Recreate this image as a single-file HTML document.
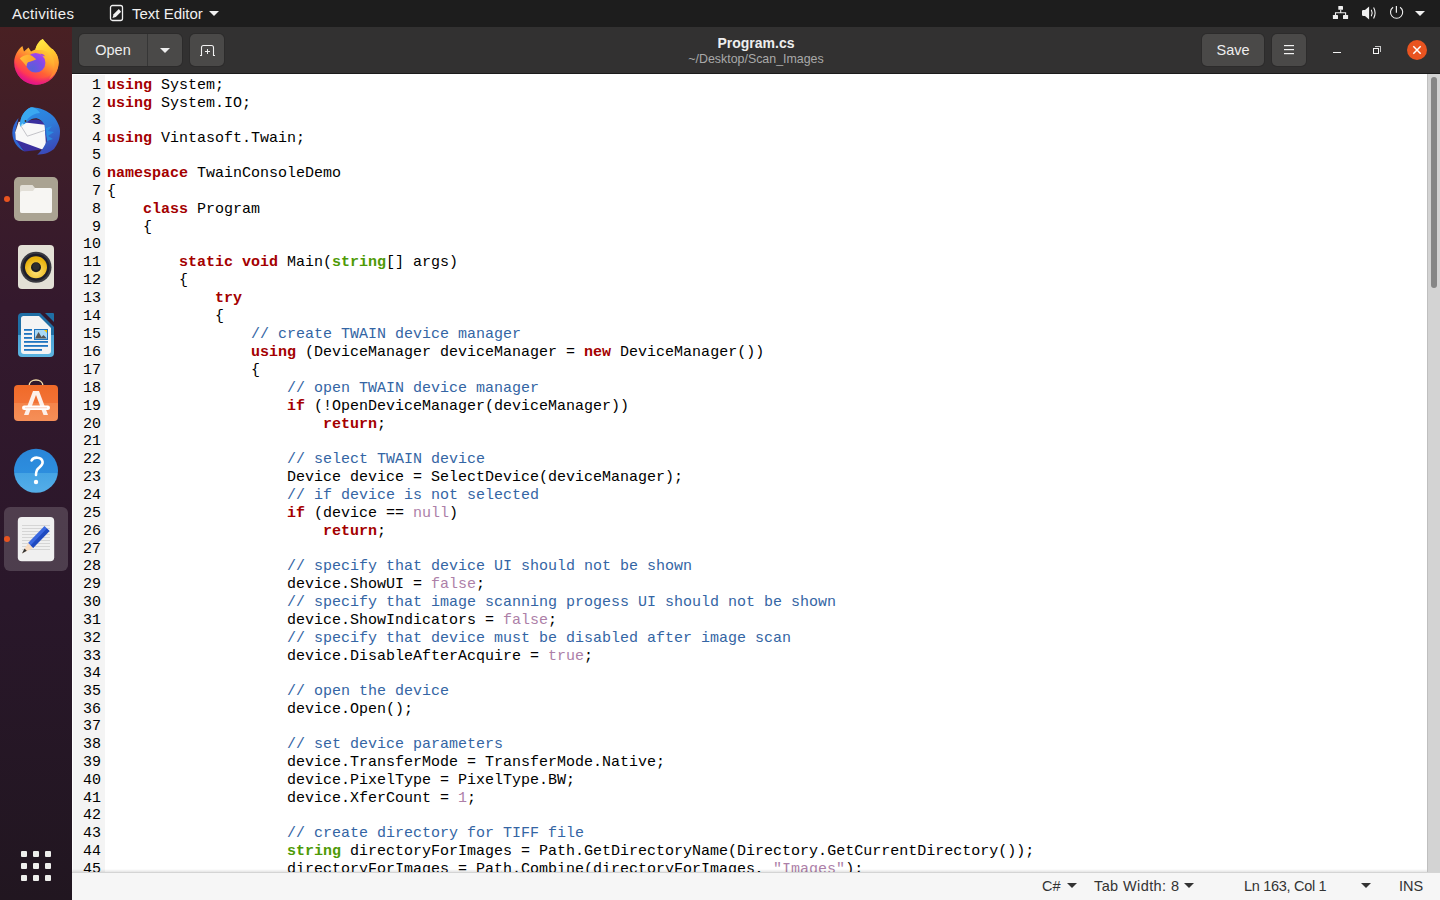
<!DOCTYPE html>
<html><head><meta charset="utf-8">
<style>
*{margin:0;padding:0;box-sizing:border-box}
html,body{width:1440px;height:900px;overflow:hidden;background:#fff;font-family:"Liberation Sans",sans-serif}
#panel{position:absolute;left:0;top:0;width:1440px;height:27px;background:#1d1d1d;color:#f0f0f0}
#panel .txt{position:absolute;top:0;height:27px;line-height:27px;font-size:15px;white-space:nowrap}
#dock{position:absolute;left:0;top:27px;width:72px;height:873px;background:linear-gradient(#492023 0%,#3d1d29 15%,#34192d 32%,#29172a 66%,#211620 100%)}
#hb{position:absolute;left:72px;top:27px;width:1368px;height:46px;background:#323131}
#hbb{position:absolute;left:72px;top:73px;width:1368px;height:1px;background:#1b1b1b}
.btn{position:absolute;top:34px;height:32px;background:#4a4948;border-radius:5px;box-shadow:0 0 0 1px #2c2b2b;color:#eee;font-size:14.5px;line-height:32px;text-align:center}
#view{position:absolute;left:72px;top:74px;width:1368px;height:798px;background:#fff;overflow:hidden}
#gutter{position:absolute;left:73px;top:75px;width:32px;height:797px;background:#f4f4f4}
.ln{position:absolute;left:0;height:18px;white-space:pre;font-family:"Liberation Mono",monospace;font-size:15px;line-height:18px;color:#000}
.ln .num{position:absolute;left:83px;width:18px;text-align:right}
.ln .src{position:absolute;left:107px}
.k{color:#a40000;font-weight:bold}
.t{color:#4e9a06;font-weight:bold}
.c{color:#3465a4}
.n{color:#ad7fa8}
#codewrap{position:absolute;left:0;top:0;width:1427px;height:872px;overflow:hidden;clip-path:inset(74px 0 0 72px)}
#sbt{position:absolute;left:1427px;top:74px;width:13px;height:798px;background:#d3d3d3;border-left:1px solid #bfbfbf}
#sbthumb{position:absolute;left:1431px;top:77px;width:6px;height:211px;background:#868686;border-radius:3px}
#status{position:absolute;left:72px;top:872px;width:1368px;height:28px;background:#f6f6f6;border-top:1px solid #d4d4d4;color:#333;font-size:14.5px}
#status .txt{position:absolute;top:0;line-height:27px;white-space:nowrap}
.tri{position:absolute;width:0;height:0;border-left:5px solid transparent;border-right:5px solid transparent;border-top:5px solid currentColor}
</style></head><body>
<div id="panel">
  <div class="txt" style="left:12px;letter-spacing:0.3px">Activities</div>
  <svg style="position:absolute;left:109px;top:4px" width="16" height="18" viewBox="0 0 16 18">
    <rect x="1.5" y="1.5" width="12" height="15" rx="2" fill="none" stroke="#f0f0f0" stroke-width="1.3"/>
    <path d="M4.6 10.3 L9.8 5 L12.1 7.8 L6.8 13 L3.5 13.9 Z" fill="#f0f0f0"/>
  </svg>
  <div class="txt" style="left:132px">Text Editor</div>
  <div class="tri" style="left:209px;top:11px;color:#f0f0f0"></div>
  <svg style="position:absolute;left:1330px;top:4px" width="20" height="18" viewBox="0 0 20 18">
    <rect x="8.3" y="1.9" width="4.7" height="3.9" rx="0.6" fill="#f0f0f0"/>
    <rect x="2.9" y="11" width="5.1" height="4" rx="0.6" fill="#f0f0f0"/>
    <rect x="13" y="11" width="5.1" height="4" rx="0.6" fill="#f0f0f0"/>
    <path d="M10.7 5.8 V8.8 M5.5 11 V8.8 H15.6 V11" stroke="#f0f0f0" stroke-width="1.1" fill="none"/>
  </svg>
  <svg style="position:absolute;left:1360px;top:4px" width="18" height="18" viewBox="0 0 18 18">
    <path d="M3.2 6 H5 L9.1 2.4 V15.5 L5 12 H3.2 Q2 12 2 10.8 V7.2 Q2 6 3.2 6 Z" fill="#f0f0f0"/>
    <path d="M11.3 5.8 Q13 9 11.3 12.2" stroke="#f0f0f0" stroke-width="1.1" fill="none"/>
    <path d="M13.6 3.6 Q16.6 9 13.6 14.4" stroke="#f0f0f0" stroke-width="1.1" fill="none"/>
  </svg>
  <svg style="position:absolute;left:1388px;top:4px" width="18" height="18" viewBox="0 0 18 18">
    <path d="M5.1 3.2 A6.1 6.1 0 1 0 12.1 3.2" stroke="#f0f0f0" stroke-width="1.1" fill="none"/>
    <path d="M8.4 1.9 V8.8" stroke="#f0f0f0" stroke-width="1.2"/>
  </svg>
  <div class="tri" style="left:1415px;top:11px;color:#f0f0f0"></div>
</div>

<div id="dock">
<svg width="72" height="873" viewBox="0 27 72 873" style="position:absolute;left:0;top:0">
<defs>
  <linearGradient id="ffo" x1="0.8" y1="0.1" x2="0.3" y2="1">
    <stop offset="0" stop-color="#ffe040"/>
    <stop offset="0.35" stop-color="#ffac30"/>
    <stop offset="0.62" stop-color="#ff6236"/>
    <stop offset="0.84" stop-color="#ff3458"/>
    <stop offset="1" stop-color="#e8148a"/>
  </linearGradient>
  <linearGradient id="ffy" x1="0" y1="0" x2="0.3" y2="1">
    <stop offset="0" stop-color="#fff148"/>
    <stop offset="0.5" stop-color="#ffc830"/>
    <stop offset="1" stop-color="#ff8a30"/>
  </linearGradient>
  <radialGradient id="ffrim" cx="0.55" cy="0.3" r="0.7">
    <stop offset="0.78" stop-color="#e0158a" stop-opacity="0"/>
    <stop offset="1" stop-color="#e0158a" stop-opacity="0.9"/>
  </radialGradient>
  <linearGradient id="ffsn" x1="0" y1="0" x2="1" y2="0.3">
    <stop offset="0" stop-color="#ffc23a"/>
    <stop offset="1" stop-color="#ff9e2a"/>
  </linearGradient>
  <radialGradient id="ffp" cx="0.35" cy="0.8" r="0.9">
    <stop offset="0" stop-color="#5860d8"/>
    <stop offset="0.55" stop-color="#7d4ce6"/>
    <stop offset="1" stop-color="#b23ff0"/>
  </radialGradient>
  <linearGradient id="tbb" x1="0.2" y1="0" x2="0.6" y2="1">
    <stop offset="0" stop-color="#2a8ee6"/>
    <stop offset="0.5" stop-color="#2f7ad8"/>
    <stop offset="1" stop-color="#3a48b8"/>
  </linearGradient>
  <radialGradient id="rby" cx="0.5" cy="0.7" r="0.6">
    <stop offset="0" stop-color="#ffe27a"/>
    <stop offset="1" stop-color="#e8b20c"/>
  </radialGradient>
  <linearGradient id="lob" x1="0" y1="0" x2="0" y2="1">
    <stop offset="0" stop-color="#1f6fa5"/>
    <stop offset="0.5" stop-color="#1f6fa5"/>
    <stop offset="0.5" stop-color="#4aa3d6"/>
    <stop offset="1" stop-color="#5cb4e0"/>
  </linearGradient>
  <linearGradient id="asb" x1="0" y1="0" x2="0" y2="1">
    <stop offset="0" stop-color="#f06a28"/>
    <stop offset="0.5" stop-color="#f27236"/>
    <stop offset="0.5" stop-color="#f4844a"/>
    <stop offset="1" stop-color="#f58f58"/>
  </linearGradient>
  <linearGradient id="hlp" x1="0" y1="0" x2="0" y2="1">
    <stop offset="0" stop-color="#2a85d8"/>
    <stop offset="0.55" stop-color="#2d8ede"/>
    <stop offset="0.55" stop-color="#45a4e4"/>
    <stop offset="1" stop-color="#55aee8"/>
  </linearGradient>
</defs>
<!-- firefox -->
<g>
  <path id="ffshape" d="M22.4 46 L24 51.6 L28.5 47.6 L31 51.5 C33 50.5 34.5 50 35.4 49.3 C36.5 44.5 39 41 42.7 38.9 C45.5 42.5 49 46 51.6 48.7 L52.8 49.3 C56.5 53 58.6 57.5 58.6 62.5 A22.2 22.2 0 0 1 14.2 62.5 C14.2 56 17.5 50 22.4 46 Z" fill="url(#ffo)"/>
  <path d="M22.4 46 L24 51.6 L28.5 47.6 L31 51.5 C33 50.5 34.5 50 35.4 49.3 C36.5 44.5 39 41 42.7 38.9 C45.5 42.5 49 46 51.6 48.7 L52.8 49.3 C56.5 53 58.6 57.5 58.6 62.5 A22.2 22.2 0 0 1 14.2 62.5 C14.2 56 17.5 50 22.4 46 Z" fill="url(#ffrim)"/>
  <path d="M42.7 38.9 C45.5 42.5 49 46 51.6 48.7 L52.8 49.3 C56.5 53 58.6 57.5 58.6 62.5 C58.6 70 54 76 49 79 C53 74 55 68 54 62 C53 55 48 51 42 50 C39 50 37 50.5 35.4 49.3 C36.5 44.5 39 41 42.7 38.9 Z" fill="url(#ffy)"/>
  <circle cx="35.6" cy="62.7" r="9.8" fill="url(#ffp)"/>
  <path d="M40 54 C42 53.5 44 54.5 45 56.5 C43.5 56 42 55.5 40 54 Z" fill="#a040e8"/>
  <path d="M19.8 58.5 C21.5 56.5 24 55.5 26.5 55 C29 54.5 31.5 55.5 33.5 57 C34.5 57.8 35.5 58.5 36.3 59.2 C33.5 60.8 30.5 61.5 28 62.2 C27 63.5 26.5 65 26.5 66.5 C25 64 22 61 19.8 58.5 Z" fill="url(#ffsn)"/>
</g>
<!-- thunderbird -->
<g>
  <path d="M18.5 118 C14 123 12.3 128 12.3 133 C12.5 141 17 148 24.5 151.5 C22 148 19.5 145 18 141 L16 140 L15.2 132 Z" fill="#2f68d4"/>
  <path d="M27 122 C33 118 42 119 45 125 L47 140 L42.4 149.5 L24.5 151.5 L15.8 139.7 Z" fill="#3a2f9e"/>
  <path d="M18.7 121.8 L44.7 124.7 L46 146 L42.4 149.5 L15.8 139.7 L15.2 132.2 Z" fill="#f8f8f8"/>
  <path d="M18.7 122.3 L27.3 136.2 L44.7 130.4" stroke="#a0a0a8" stroke-width="0.6" fill="none"/>
  <path d="M20.1 126.4 C20 121 21 116 25 111.4 C28 108.5 30 107.5 32 107.3 C35 107.5 37 108 40 108.5 C45 110 48 112 50.5 113.7 C54 116.5 56 119 57.4 122.3 C59.5 126 60 129 60 131 C60 135 59.5 138 58.6 140.8 C57 144.5 55.5 147 54 149 C51 151.5 48.5 152.5 45.8 153.6 C43 154.4 40 154.7 37.2 154.7 C39.5 152.5 41 150.5 42.4 148.9 C44.5 146 46 143 47 139.7 C46.5 137.5 45.8 135.5 45.3 134 C45.3 130 45 127.5 44.7 125.2 C43.5 123 42 121 40 119.8 C38.5 118.8 37 118.3 36 118.3 C33 118.3 30.5 119.5 28.5 121 C26 123 23 125 20.1 126.4 Z" fill="url(#tbb)"/>
  <path d="M20.1 126.4 C20 121 21 116 25 111.4 C28 108.5 30 107.5 32 107.3 C36 108 38 110 40 113 C35 113 30 116 27 120 C25 122.5 22.5 125 20.1 126.4 Z" fill="#3aa8f0"/>
  <path d="M46 128 L52 126 L48 131 L54 132 L48 136 L53 139 L47 141 Z" fill="#2a9ae8" opacity="0.7"/>
  <path d="M20.1 126.4 L22.5 123.3 L24.3 124.8 Z" fill="#a8e0f0"/>
  <circle cx="25.5" cy="121" r="0.9" fill="#3a2a20"/>
</g>
<!-- files -->
<g>
  <rect x="14" y="177" width="44" height="44" rx="5" fill="#aaa392"/>
  <path d="M22 185 H32.5 L35 188 H50 Q52 188 52 190 V211 Q52 213 50 213 H22 Q20 213 20 211 V187 Q20 185 22 185 Z" fill="#e2dfd7"/>
  <path d="M22 191 H33 L35 188 H50 Q52 188 52 190 V211 Q52 213 50 213 H22 Q20 213 20 211 V193 Q20 191 22 191 Z" fill="#f7f6f3"/>
</g>
<circle cx="7" cy="199" r="3" fill="#e95420"/>
<!-- rhythmbox -->
<g>
  <rect x="18" y="245" width="36" height="44" rx="4" fill="#e3e0d6"/>
  <circle cx="36" cy="267.3" r="15.5" fill="#3a3a40"/>
  <circle cx="36" cy="267.3" r="13.5" fill="#1e1e2a"/>
  <circle cx="36" cy="267.3" r="11" fill="url(#rby)"/>
  <circle cx="36" cy="267.3" r="5" fill="#1c1c20"/><circle cx="36" cy="266.5" r="3.5" fill="#3a3a3a" opacity="0.6"/>
</g>
<!-- libreoffice writer -->
<g>
  <path d="M22 313 H40 L54 327 V353 Q54 357 50 357 H22 Q18 357 18 353 V317 Q18 313 22 313 Z" fill="url(#lob)"/>
  <path d="M23.5 316 H39 L51 328 V351 Q51 354 48 354 H24 Q21 354 21 351 V318.5 Q21 316 23.5 316 Z" fill="#f4f4f4"/>
  <path d="M45 313 H53 Q54 313 54 314 V322 Z" fill="#1f6fa5"/>
  <rect x="24" y="329" width="8" height="1.8" fill="#1e74c0"/>
  <rect x="24" y="333" width="8" height="1.8" fill="#1e74c0"/>
  <rect x="24" y="337" width="8" height="1.8" fill="#1e74c0"/>
  <rect x="24" y="341" width="24" height="1.8" fill="#1e74c0"/>
  <rect x="24" y="345" width="24" height="1.8" fill="#1e74c0"/>
  <rect x="24" y="349" width="18" height="1.8" fill="#1e74c0"/>
  <rect x="34" y="329" width="14" height="11" fill="#1e74c0"/>
  <rect x="35" y="330" width="12" height="9" fill="#a8d8f5"/>
  <path d="M35 338.5 L38.5 332 L41.5 337 L43.5 335 L47 338.5 Z" fill="#555"/>
  <path d="M44 330 H47 V333 Z" fill="#f5c400"/>
</g>
<!-- app center -->
<g>
  <path d="M29 388 V386 C29 378 43 378 43 386 V388" stroke="#f3dca8" stroke-width="1.5" fill="none"/>
  <rect x="14" y="385" width="44" height="36" rx="4" fill="url(#asb)"/>
  <path d="M24 415 L33 391 H39 L48 415 H43.5 L36 395 H36 L28.5 415 Z" fill="#fdf0ea"/>
  <rect x="22" y="405.5" width="28" height="4.5" rx="2.2" fill="#fff"/>
  <rect x="25" y="407.4" width="22" height="0.8" fill="#f8c8b8"/>
</g>
<!-- help -->
<g>
  <circle cx="36" cy="470.8" r="22" fill="url(#hlp)"/>
  <path d="M31.6 460.5 C33.5 456.5 42 456.5 42.6 462 C43 466 38.5 467.5 37 470 C36.3 471.5 36 473 36 475" stroke="#fff" stroke-width="2.6" fill="none" stroke-linecap="round"/>
  <circle cx="36" cy="482" r="2.2" fill="#fff"/>
</g>
<!-- text editor (active) -->
<rect x="4" y="507" width="64" height="64" rx="6" fill="#ffffff" fill-opacity="0.17"/>
<circle cx="7" cy="539" r="3" fill="#e95420"/>
<g>
  <rect x="17.8" y="517" width="36.4" height="44.3" rx="4" fill="#f0f0f0"/>
  <g fill="#cfcfcf">
    <rect x="22" y="525" width="28" height="0.8"/>
    <rect x="22" y="528" width="28" height="0.8"/>
    <rect x="22" y="531" width="28" height="0.8"/>
    <rect x="22" y="534" width="28" height="0.8"/>
    <rect x="22" y="537" width="28" height="0.8"/>
    <rect x="22" y="540" width="28" height="0.8"/>
    <rect x="22" y="543" width="28" height="0.8"/>
    <rect x="22" y="546" width="28" height="0.8"/>
    <rect x="22" y="549" width="28" height="0.8"/>
  </g>
  <path d="M28 543 L44.5 526 L49.5 531 L33 548 Z" fill="#3a68e0"/>
  <path d="M46.8 528.5 L49.5 531 L33 548 L30.5 545.5 Z" fill="#1f4ac0"/>
  <path d="M28 543 L33 548 L22 553.5 Z" fill="#f8dcc0"/>
  <path d="M22 553.5 L24.5 548.5 L26.8 550.8 Z" fill="#333"/>
</g>
<!-- show apps -->
<g fill="#eeeeec">
  <rect x="21" y="851" width="6" height="6" rx="1"/>
  <rect x="33" y="851" width="6" height="6" rx="1"/>
  <rect x="45" y="851" width="6" height="6" rx="1"/>
  <rect x="21" y="863" width="6" height="6" rx="1"/>
  <rect x="33" y="863" width="6" height="6" rx="1"/>
  <rect x="45" y="863" width="6" height="6" rx="1"/>
  <rect x="21" y="875" width="6" height="6" rx="1"/>
  <rect x="33" y="875" width="6" height="6" rx="1"/>
  <rect x="45" y="875" width="6" height="6" rx="1"/>
</g>
</svg>

</div>

<div id="hb"></div>
<div id="hbb"></div>
<div class="btn" style="left:79px;width:103px;border-radius:5px"></div>
<div style="position:absolute;left:147px;top:34px;width:1px;height:32px;background:#363636"></div>
<div style="position:absolute;left:79px;top:34px;width:68px;height:32px;line-height:32px;text-align:center;color:#eee;font-size:14.5px">Open</div>
<div class="tri" style="left:160px;top:48px;color:#eee"></div>
<div class="btn" style="left:190px;width:34px"></div>
<svg style="position:absolute;left:198px;top:43px" width="18" height="16" viewBox="0 0 18 16">
  <path d="M2 12.5 H3.5 V4.5 Q3.5 2.5 5.5 2.5 H13.5 Q15.5 2.5 15.5 4.5 V12.5 H17" stroke="#f2f2f2" stroke-width="1.1" fill="none"/>
  <path d="M7 8.5 H12 M9.5 6 V11" stroke="#eee" stroke-width="1"/>
</svg>
<div style="position:absolute;left:556px;top:34px;width:400px;text-align:center;color:#eee;font-size:14px;font-weight:bold;line-height:18px">Program.cs</div>
<div style="position:absolute;left:556px;top:51px;width:400px;text-align:center;color:#a9a9a9;font-size:12.4px;line-height:16px">~/Desktop/Scan_Images</div>
<div class="btn" style="left:1202px;width:62px">Save</div>
<div class="btn" style="left:1272px;width:34px"></div>
<div style="position:absolute;left:1284px;top:45px;width:10px;height:1px;background:#f2f2f2;box-shadow:0 0.3px 0 #bbb"></div>
<div style="position:absolute;left:1284px;top:49px;width:10px;height:1px;background:#f2f2f2;box-shadow:0 0.3px 0 #bbb"></div>
<div style="position:absolute;left:1284px;top:53px;width:10px;height:1px;background:#f2f2f2;box-shadow:0 0.3px 0 #bbb"></div>
<div style="position:absolute;left:1333px;top:52px;width:8px;height:1px;background:#f2f2f2"></div>
<div style="position:absolute;left:1373px;top:48px;width:6px;height:6px;border:1px solid #f6f6f6"></div>
<div style="position:absolute;left:1375px;top:46px;width:6px;height:6px;border-top:1px solid #c8c8c8;border-right:1px solid #c8c8c8"></div>
<div style="position:absolute;left:1407px;top:40px;width:20px;height:20px;border-radius:50%;background:#e95420"></div>
<svg style="position:absolute;left:1407px;top:40px" width="20" height="20" viewBox="0 0 20 20">
  <path d="M6.3 6.3 L13.7 13.7 M13.7 6.3 L6.3 13.7" stroke="#fff" stroke-width="1.5"/>
</svg>

<div id="view"></div>
<div id="gutter"></div>
<div id="codewrap">
<div class="ln" style="top:77px"><span class="num">1</span><span class="src"><span class="k">using</span> System;</span></div>
<div class="ln" style="top:95px"><span class="num">2</span><span class="src"><span class="k">using</span> System.IO;</span></div>
<div class="ln" style="top:112px"><span class="num">3</span><span class="src"></span></div>
<div class="ln" style="top:130px"><span class="num">4</span><span class="src"><span class="k">using</span> Vintasoft.Twain;</span></div>
<div class="ln" style="top:147px"><span class="num">5</span><span class="src"></span></div>
<div class="ln" style="top:165px"><span class="num">6</span><span class="src"><span class="k">namespace</span> TwainConsoleDemo</span></div>
<div class="ln" style="top:183px"><span class="num">7</span><span class="src">{</span></div>
<div class="ln" style="top:201px"><span class="num">8</span><span class="src">    <span class="k">class</span> Program</span></div>
<div class="ln" style="top:219px"><span class="num">9</span><span class="src">    {</span></div>
<div class="ln" style="top:236px"><span class="num">10</span><span class="src"></span></div>
<div class="ln" style="top:254px"><span class="num">11</span><span class="src">        <span class="k">static</span> <span class="k">void</span> Main(<span class="t">string</span>[] args)</span></div>
<div class="ln" style="top:272px"><span class="num">12</span><span class="src">        {</span></div>
<div class="ln" style="top:290px"><span class="num">13</span><span class="src">            <span class="k">try</span></span></div>
<div class="ln" style="top:308px"><span class="num">14</span><span class="src">            {</span></div>
<div class="ln" style="top:326px"><span class="num">15</span><span class="src">                <span class="c">// create TWAIN device manager</span></span></div>
<div class="ln" style="top:344px"><span class="num">16</span><span class="src">                <span class="k">using</span> (DeviceManager deviceManager = <span class="k">new</span> DeviceManager())</span></div>
<div class="ln" style="top:362px"><span class="num">17</span><span class="src">                {</span></div>
<div class="ln" style="top:380px"><span class="num">18</span><span class="src">                    <span class="c">// open TWAIN device manager</span></span></div>
<div class="ln" style="top:398px"><span class="num">19</span><span class="src">                    <span class="k">if</span> (!OpenDeviceManager(deviceManager))</span></div>
<div class="ln" style="top:416px"><span class="num">20</span><span class="src">                        <span class="k">return</span>;</span></div>
<div class="ln" style="top:433px"><span class="num">21</span><span class="src"></span></div>
<div class="ln" style="top:451px"><span class="num">22</span><span class="src">                    <span class="c">// select TWAIN device</span></span></div>
<div class="ln" style="top:469px"><span class="num">23</span><span class="src">                    Device device = SelectDevice(deviceManager);</span></div>
<div class="ln" style="top:487px"><span class="num">24</span><span class="src">                    <span class="c">// if device is not selected</span></span></div>
<div class="ln" style="top:505px"><span class="num">25</span><span class="src">                    <span class="k">if</span> (device == <span class="n">null</span>)</span></div>
<div class="ln" style="top:523px"><span class="num">26</span><span class="src">                        <span class="k">return</span>;</span></div>
<div class="ln" style="top:541px"><span class="num">27</span><span class="src"></span></div>
<div class="ln" style="top:558px"><span class="num">28</span><span class="src">                    <span class="c">// specify that device UI should not be shown</span></span></div>
<div class="ln" style="top:576px"><span class="num">29</span><span class="src">                    device.ShowUI = <span class="n">false</span>;</span></div>
<div class="ln" style="top:594px"><span class="num">30</span><span class="src">                    <span class="c">// specify that image scanning progess UI should not be shown</span></span></div>
<div class="ln" style="top:612px"><span class="num">31</span><span class="src">                    device.ShowIndicators = <span class="n">false</span>;</span></div>
<div class="ln" style="top:630px"><span class="num">32</span><span class="src">                    <span class="c">// specify that device must be disabled after image scan</span></span></div>
<div class="ln" style="top:648px"><span class="num">33</span><span class="src">                    device.DisableAfterAcquire = <span class="n">true</span>;</span></div>
<div class="ln" style="top:665px"><span class="num">34</span><span class="src"></span></div>
<div class="ln" style="top:683px"><span class="num">35</span><span class="src">                    <span class="c">// open the device</span></span></div>
<div class="ln" style="top:701px"><span class="num">36</span><span class="src">                    device.Open();</span></div>
<div class="ln" style="top:718px"><span class="num">37</span><span class="src"></span></div>
<div class="ln" style="top:736px"><span class="num">38</span><span class="src">                    <span class="c">// set device parameters</span></span></div>
<div class="ln" style="top:754px"><span class="num">39</span><span class="src">                    device.TransferMode = TransferMode.Native;</span></div>
<div class="ln" style="top:772px"><span class="num">40</span><span class="src">                    device.PixelType = PixelType.BW;</span></div>
<div class="ln" style="top:790px"><span class="num">41</span><span class="src">                    device.XferCount = <span class="n">1</span>;</span></div>
<div class="ln" style="top:807px"><span class="num">42</span><span class="src"></span></div>
<div class="ln" style="top:825px"><span class="num">43</span><span class="src">                    <span class="c">// create directory for TIFF file</span></span></div>
<div class="ln" style="top:843px"><span class="num">44</span><span class="src">                    <span class="t">string</span> directoryForImages = Path.GetDirectoryName(Directory.GetCurrentDirectory());</span></div>
<div class="ln" style="top:861px"><span class="num">45</span><span class="src">                    directoryForImages = Path.Combine(directoryForImages, <span class="n">&quot;Images&quot;</span>);</span></div>
</div>
<div style="position:absolute;left:72px;top:869px;width:1355px;height:3px;background:linear-gradient(rgba(0,0,0,0),rgba(0,0,0,0.1))"></div>
<div id="sbt"></div>
<div id="sbthumb"></div>
<div id="status">
  <div class="txt" style="left:970px">C#</div>
  <div class="tri" style="left:995px;top:10px;color:#333"></div>
  <div class="txt" style="left:1022px;letter-spacing:0.4px">Tab Width: 8</div>
  <div class="tri" style="left:1112px;top:10px;color:#333"></div>
  <div class="txt" style="left:1172px;letter-spacing:-0.3px">Ln 163, Col 1</div>
  <div class="tri" style="left:1289px;top:10px;color:#333"></div>
  <div class="txt" style="left:1327px">INS</div>
</div>
</body></html>
